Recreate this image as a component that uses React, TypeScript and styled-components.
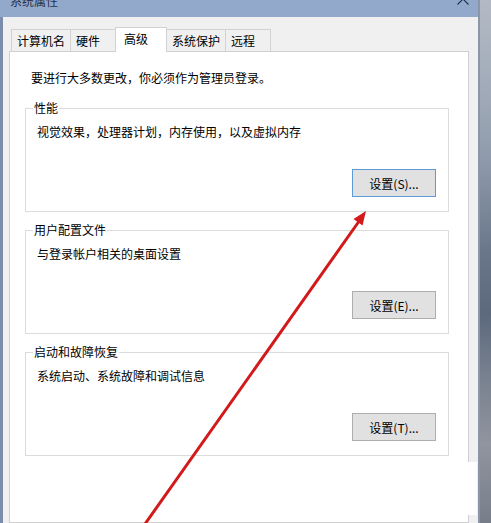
import React from "react";
import styled, { createGlobalStyle } from "styled-components";

const Global = createGlobalStyle`
  html, body { margin: 0; padding: 0; }
  body {
    width: 491px;
    height: 523px;
    overflow: hidden;
    font-family: "Noto Sans CJK SC", "Noto Sans", sans-serif;
    font-size: 12px;
    color: #000;
  }
`;

const Screen = styled.div`
  position: relative;
  display: flex;
  width: 491px;
  height: 523px;
  overflow: hidden;
  background: #7d8a9c;
`;

const Window = styled.div`
  width: 480px;
  flex: none;
  display: flex;
  flex-direction: column;
  background: #92a9cc;
  border-right: 2px solid #8a96a8;
  box-sizing: border-box;
`;

const TitleBar = styled.div`
  height: 17px;
  flex: none;
  display: flex;
  align-items: flex-start;
  justify-content: space-between;
  padding: 0 9px 0 10px;
  overflow: hidden;
`;

const Title = styled.span`
  margin-top: -7px;
  line-height: 16px;
  font-size: 12px;
  color: #22304a;
`;

const CloseIcon = styled.svg`
  margin-top: -7px;
  flex: none;
`;

const Body = styled.div`
  flex: 1;
  display: flex;
  flex-direction: column;
  background: #f0f0f0;
  border-left: 3px solid #7b8daa;
  padding: 10px 9px 0 6px;
  min-height: 0;
`;

const TabStrip = styled.div`
  display: flex;
  align-items: flex-end;
  padding-left: 2px;
`;

const Tab = styled.div<{ $active?: boolean }>`
  box-sizing: border-box;
  display: flex;
  align-items: center;
  height: ${(p) => (p.$active ? "25px" : "22px")};
  min-width: ${(p) => (p.$active ? "52px" : "46px")};
  padding: ${(p) => (p.$active ? "0 5px 3px 8px" : "1px 5px 0 5px")};
  margin-left: -1px;
  margin-bottom: ${(p) => (p.$active ? "-1px" : "0")};
  border: 1px solid #d2d2d2;
  border-bottom: none;
  background: ${(p) => (p.$active ? "#ffffff" : "#f0f0f0")};
  position: relative;
  z-index: ${(p) => (p.$active ? 1 : 0)};
  line-height: 16px;
  white-space: nowrap;
  &:first-child { margin-left: 0; }
`;

const Panel = styled.div`
  flex: 1;
  display: flex;
  flex-direction: column;
  background: #fff;
  border: 1px solid #d0d0d0;
  padding: 18px 19px 0 15px;
`;

const Notice = styled.div`
  line-height: 16px;
  padding-left: 6px;
  margin-bottom: 14px;
`;

const Groups = styled.div`
  display: flex;
  flex-direction: column;
  gap: 10px;
`;

const Group = styled.fieldset`
  margin: 0;
  border: 1px solid #dcdcdc;
  padding: 8px 12px 14px 11px;
  min-width: 0;
`;

const Legend = styled.legend`
  padding: 0 1px;
  margin-left: -4px;
  line-height: 16px;
`;

const Desc = styled.div`
  line-height: 16px;
`;

const ButtonRow = styled.div`
  display: flex;
  justify-content: flex-end;
  margin-top: 29px;
`;

const Button = styled.button<{ $default?: boolean }>`
  box-sizing: border-box;
  width: 84px;
  height: 28px;
  padding: 0;
  background: #e1e1e1;
  border: 1px solid ${(p) => (p.$default ? "#5d9bd6" : "#adadad")};
  font-family: "Noto Sans CJK SC", "Noto Sans", sans-serif;
  font-size: 12px;
  color: #000;
`;

const Desktop = styled.div`
  flex: 1 0 11px;
  align-self: stretch;
  background: linear-gradient(
    to bottom,
    #b3bac5 0%,
    #a0aab8 18%,
    #8c98a9 32%,
    #6a778b 48%,
    #5c697d 60%,
    #78818f 72%,
    #90959f 85%,
    #777e8a 100%
  );
`;

const Patch = styled.div`
  position: absolute;
  left: 466px;
  top: 462px;
  width: 11px;
  height: 53px;
  background: #fff;
`;

const Overlay = styled.svg`
  position: absolute;
  left: 0;
  top: 0;
  pointer-events: none;
`;

const tabs = ["计算机名", "硬件", "高级", "系统保护", "远程"];

const groups = [
  { title: "性能", desc: "视觉效果，处理器计划，内存使用，以及虚拟内存", btn: "设置(S)...", def: true },
  { title: "用户配置文件", desc: "与登录帐户相关的桌面设置", btn: "设置(E)...", def: false },
  { title: "启动和故障恢复", desc: "系统启动、系统故障和调试信息", btn: "设置(T)...", def: false },
];

export default function App() {
  return (
    <>
      <Global />
      <Screen>
        <Window>
          <TitleBar>
            <Title>系统属性</Title>
            <CloseIcon width="12" height="12" viewBox="0 0 12 12">
              <path d="M0.5 0.5 L11.5 11.5 M11.5 0.5 L0.5 11.5" stroke="#22304a" strokeWidth="1.1" fill="none" />
            </CloseIcon>
          </TitleBar>
          <Body>
            <TabStrip>
              {tabs.map((t) => (
                <Tab key={t} $active={t === "高级"}>
                  {t}
                </Tab>
              ))}
            </TabStrip>
            <Panel>
              <Notice>要进行大多数更改，你必须作为管理员登录。</Notice>
              <Groups>
                {groups.map((g) => (
                  <Group key={g.title}>
                    <Legend>{g.title}</Legend>
                    <Desc>{g.desc}</Desc>
                    <ButtonRow>
                      <Button $default={g.def}>{g.btn}</Button>
                    </ButtonRow>
                  </Group>
                ))}
              </Groups>
            </Panel>
          </Body>
        </Window>
        <Desktop />
        <Patch />
        <Overlay width="491" height="523" viewBox="0 0 491 523">
          <line x1="145" y1="524" x2="358.5" y2="222" stroke="#d21a1a" strokeWidth="3" strokeLinecap="round" />
          <polygon points="366,211 362.5,225.5 353.5,219" fill="#d21a1a" />
        </Overlay>
      </Screen>
    </>
  );
}
